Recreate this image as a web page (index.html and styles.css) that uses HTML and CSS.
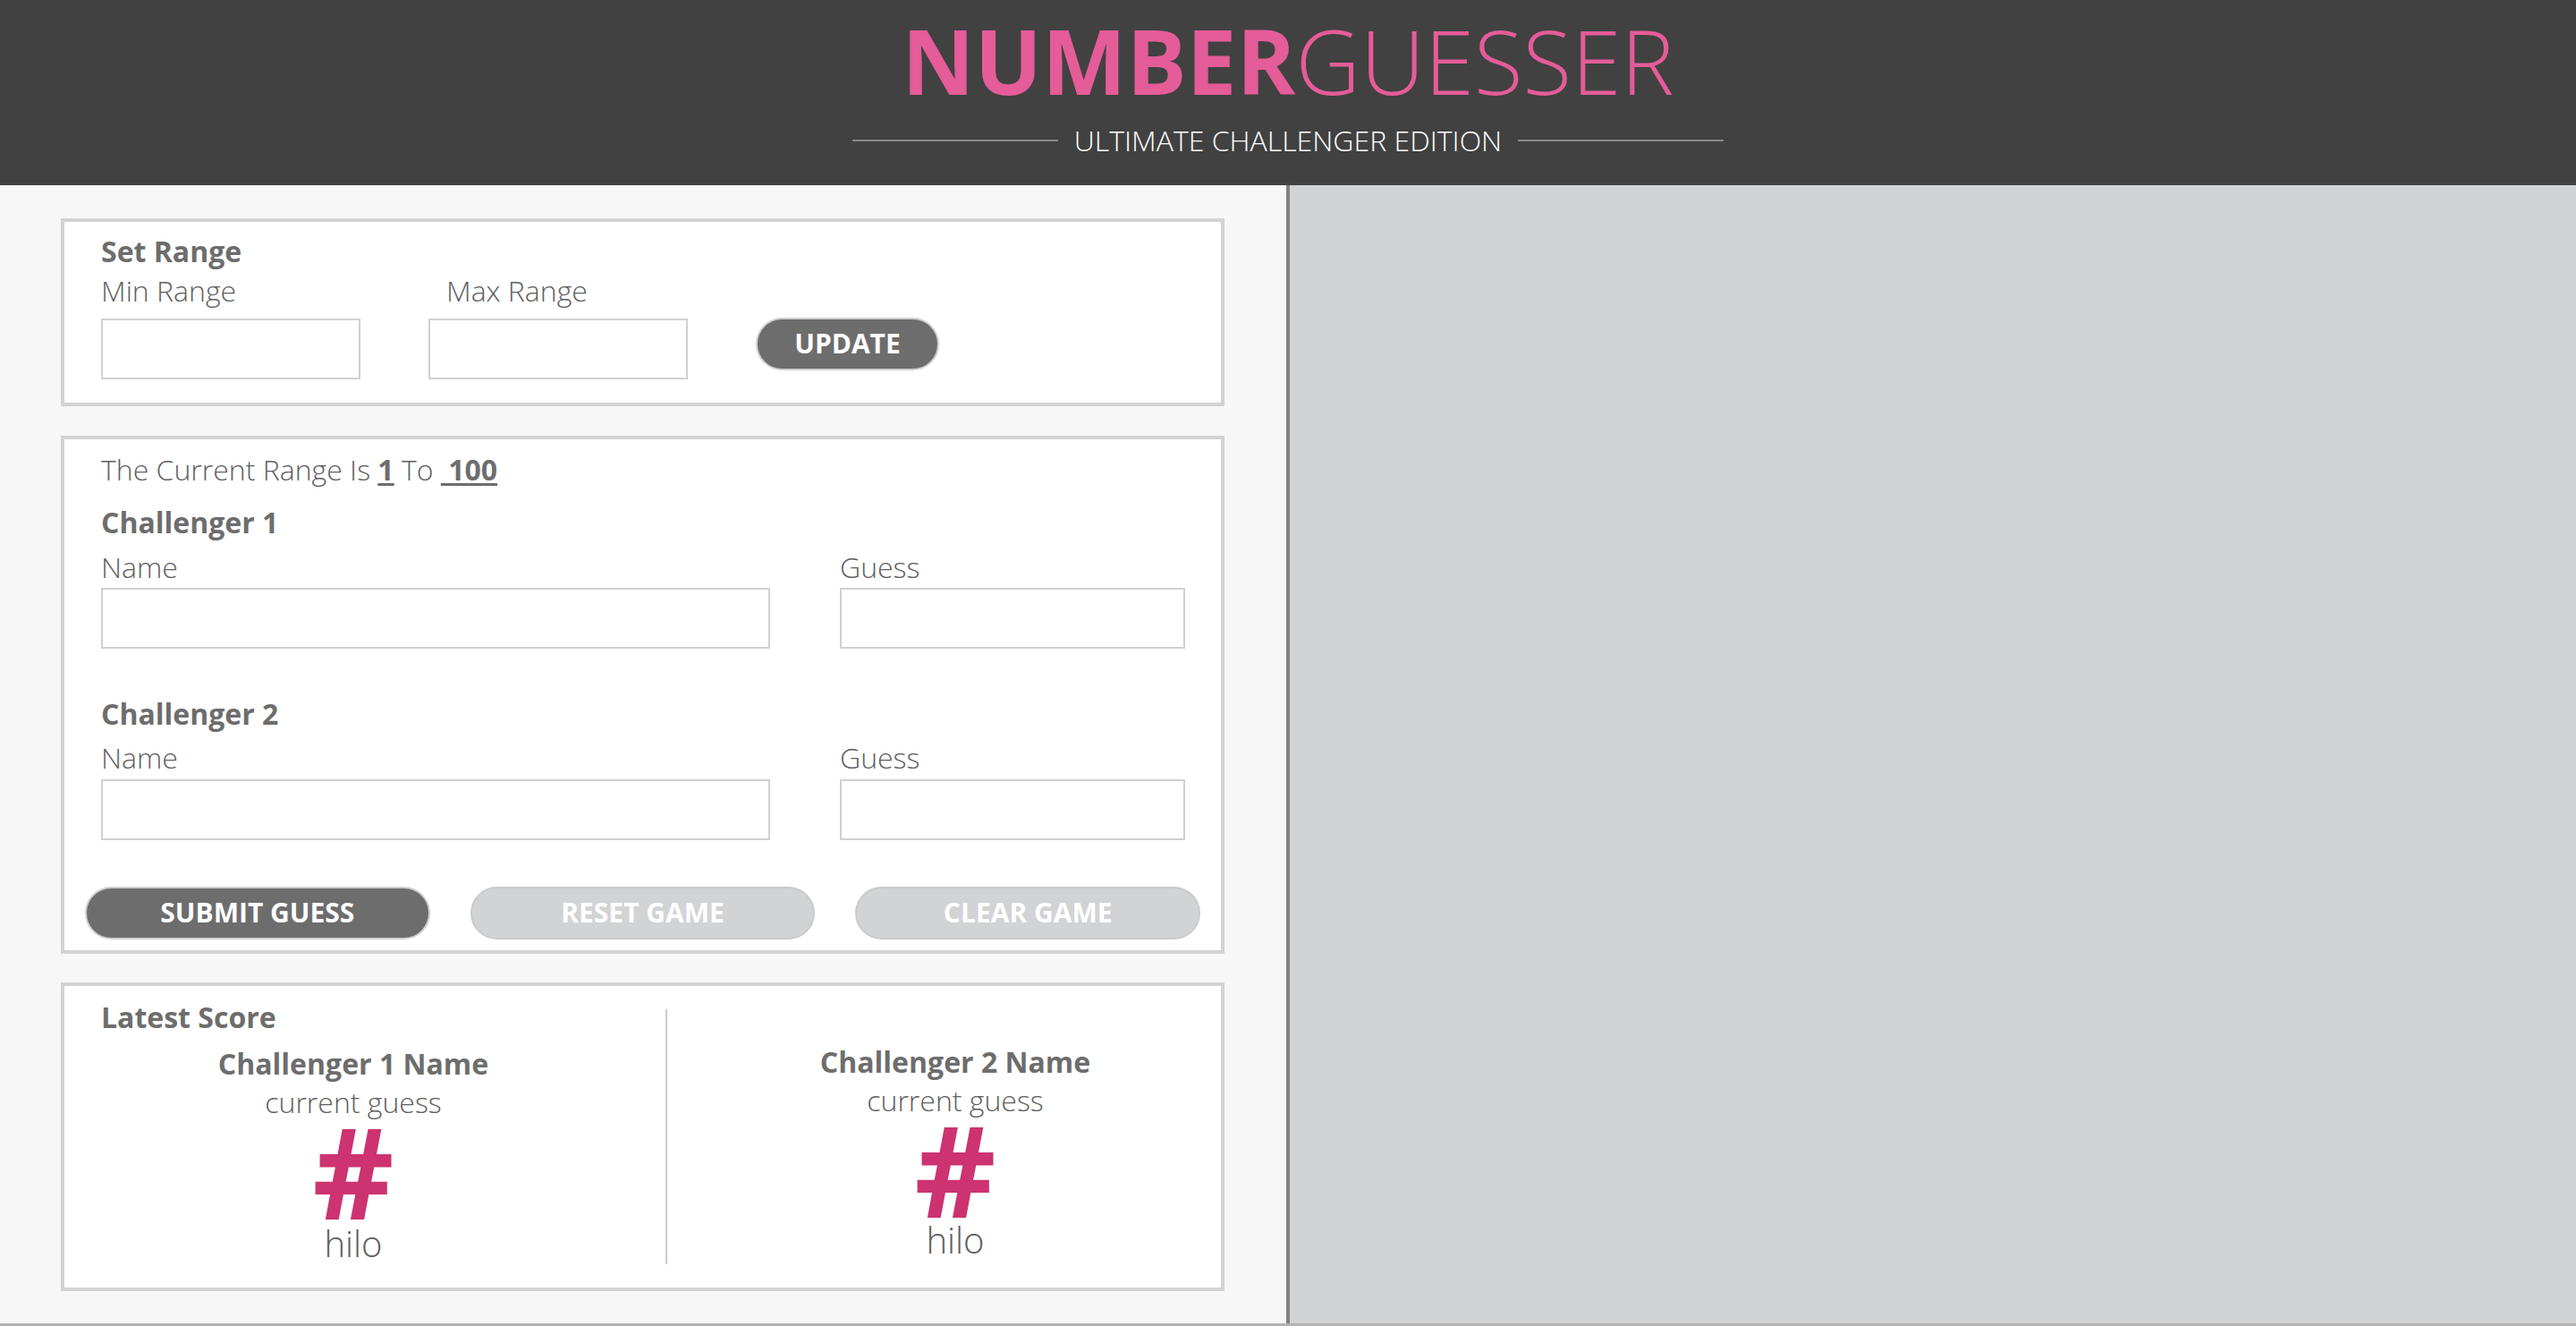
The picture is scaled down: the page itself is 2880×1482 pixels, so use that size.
FILE: index.html
```html
<!DOCTYPE html>
<html lang="en">
<head>
<meta charset="utf-8">
<title>Number Guesser</title>
<link rel="stylesheet" href="styles.css">
</head>
<body>
<header class="site-header">
  <h1 class="title"><span class="title-bold">NUMBER</span><span class="title-light">GUESSER</span></h1>
  <div class="subtitle">
    <span class="subtitle-line"></span>
    <span class="subtitle-text">ULTIMATE CHALLENGER EDITION</span>
    <span class="subtitle-line"></span>
  </div>
</header>
<main class="main">
  <section class="left-panel">
    <div class="card card-range">
      <h2 class="card-title">Set Range</h2>
      <div class="range-row">
        <div class="field">
          <label class="label label-range">Min Range</label>
          <input class="input input-range" type="text">
        </div>
        <div class="field">
          <label class="label label-range label-indent">Max Range</label>
          <input class="input input-range" type="text">
        </div>
        <button class="btn btn-dark btn-update">UPDATE</button>
      </div>
    </div>

    <div class="card card-game">
      <p class="range-text">The Current Range Is <span class="range-num">1</span> To <span class="range-num">&nbsp;100</span></p>
      <h2 class="card-title challenger-title">Challenger 1</h2>
      <div class="challenger-grid">
        <div class="field">
          <label class="label label-game">Name</label>
          <input class="input input-game" type="text">
        </div>
        <div class="field">
          <label class="label label-game">Guess</label>
          <input class="input input-game" type="text">
        </div>
      </div>
      <h2 class="card-title challenger-title challenger-title-2">Challenger 2</h2>
      <div class="challenger-grid">
        <div class="field">
          <label class="label label-game">Name</label>
          <input class="input input-game" type="text">
        </div>
        <div class="field">
          <label class="label label-game">Guess</label>
          <input class="input input-game" type="text">
        </div>
      </div>
      <div class="button-row">
        <button class="btn btn-dark btn-wide">SUBMIT GUESS</button>
        <button class="btn btn-disabled btn-wide">RESET GAME</button>
        <button class="btn btn-disabled btn-wide">CLEAR GAME</button>
      </div>
    </div>

    <div class="card card-score">
      <div class="score-grid">
        <h2 class="card-title score-title">Latest Score</h2>
        <div class="score-divider"></div>
        <div class="player player-1">
          <div class="player-name">Challenger 1 Name</div>
          <div class="player-label">current guess</div>
          <div class="player-number">#</div>
          <div class="player-hint">hilo</div>
        </div>
        <div class="player player-2">
          <div class="player-name">Challenger 2 Name</div>
          <div class="player-label">current guess</div>
          <div class="player-number">#</div>
          <div class="player-hint">hilo</div>
        </div>
      </div>
    </div>
  </section>
  <section class="right-panel"></section>
</main>
</body>
</html>
```

FILE: styles.css
```css
* {
  box-sizing: border-box;
}

html, body {
  margin: 0;
  padding: 0;
}

body {
  height: 100vh;
  display: flex;
  flex-direction: column;
  font-family: "Open Sans", "Liberation Sans", sans-serif;
  color: #6d6d6d;
  line-height: 1.2;
  overflow: hidden;
}

/* Header */
.site-header {
  height: 207px;
  flex: none;
  background: #414141;
  display: flex;
  flex-direction: column;
  align-items: center;
  padding-top: 17px;
}

.title {
  margin: 0;
  font-size: 100px;
  line-height: 1;
  color: #e45c98;
}

.title-bold {
  font-weight: 700;
}

.title-light {
  font-weight: 300;
}

.subtitle {
  margin-top: 24px;
  display: flex;
  align-items: center;
  gap: 18px;
}

.subtitle-line {
  width: 230px;
  height: 2px;
  background: #8a8a8a;
}

.subtitle-text {
  font-size: 32px;
  line-height: 1;
  font-weight: 300;
  color: #ffffff;
}

/* Main layout */
.main {
  flex: 1;
  display: flex;
  border-bottom: 3px solid #b4b4b4;
}

.left-panel {
  width: 1442px;
  flex: none;
  background: #f7f7f7;
  border-right: 4px solid #808080;
  padding: 37px 0 0 68px;
}

.right-panel {
  flex: 1;
  background: #d2d3d5;
}

/* Cards */
.card {
  width: 1301px;
  background: #ffffff;
  border: 4px solid #d2d3d5;
  padding: 0 41px;
}

.card-range {
  padding-top: 14px;
  padding-bottom: 26px;
  margin-bottom: 33px;
}

.card-game {
  padding-top: 15px;
  padding-bottom: 12px;
  margin-bottom: 32px;
}

.card-score {
  padding-top: 16px;
  padding-bottom: 26px;
}

.card-title {
  margin: 0;
  font-size: 32px;
  font-weight: 700;
  color: #6d6d6d;
}

.field {
  display: flex;
  flex-direction: column;
}

.label {
  font-size: 32px;
  font-weight: 300;
  color: #606060;
}

.label-range {
  margin-top: 6px;
  margin-bottom: 11px;
}

.label-indent {
  padding-left: 20px;
}

.label-game {
  margin-top: 11px;
  margin-bottom: 4px;
}

.input {
  height: 68px;
  border: 2px solid #d0d0d0;
  background: #ffffff;
  padding: 0 12px;
  font-family: inherit;
  font-size: 28px;
  color: #6d6d6d;
  outline: none;
}

.input-range {
  width: 290px;
}

.input-game {
  width: 100%;
}

.range-row {
  display: flex;
  align-items: flex-end;
  gap: 76px;
}

/* Buttons */
.btn {
  height: 59px;
  border-radius: 30px;
  border: 2px solid #cfcfcf;
  font-family: inherit;
  font-size: 30px;
  font-weight: 700;
  color: #ffffff;
  padding: 0;
  cursor: pointer;
  line-height: 1;
}

.btn-dark {
  background: #6d6d6d;
}

.btn-disabled {
  background: #d2d3d5;
  border-color: #c9cacc;
}

.btn-update {
  width: 205px;
  margin-bottom: 10px;
}

.btn-wide {
  width: 386px;
}

.button-row {
  display: flex;
  gap: 45px;
  margin: 52px -18px 0;
}

/* Game card */
.range-text {
  margin: 0;
  font-size: 32px;
  font-weight: 300;
  color: #606060;
}

.range-num {
  font-weight: 700;
  color: #6d6d6d;
  text-decoration: underline;
  text-underline-offset: 3px;
}

.challenger-title {
  margin-top: 21px;
}

.challenger-title-2 {
  margin-top: 54px;
}

.challenger-grid {
  display: grid;
  grid-template-columns: 748px 386px;
  column-gap: 78px;
}

/* Score card */
.score-grid {
  display: grid;
  grid-template-columns: 564px 2px 510px;
  grid-template-rows: auto auto;
  column-gap: 67px;
}

.score-title {
  grid-column: 1;
  grid-row: 1;
}

.score-divider {
  grid-column: 2;
  grid-row: 1 / 3;
  margin-top: 10px;
  background: #cccccc;
}

.player {
  grid-row: 2;
  display: flex;
  flex-direction: column;
  align-items: center;
  margin-top: 14px;
  padding-bottom: 3px;
}

.player-1 {
  grid-column: 1;
}

.player-1 .player-hint {
  margin-top: 7px;
}

.player-2 {
  grid-column: 3;
  margin-top: 12px;
  padding-bottom: 7px;
}

.player-name {
  font-size: 32px;
  font-weight: 700;
}

.player-label {
  margin-top: 4px;
  font-size: 32px;
  font-weight: 300;
  color: #606060;
}

.player-number {
  margin-top: 2px;
  font-size: 141px;
  line-height: 110px;
  font-weight: 700;
  color: #cc3370;
}

.player-hint {
  margin-top: 5px;
  font-size: 40px;
  line-height: 1;
  font-weight: 300;
  color: #606060;
}
```
